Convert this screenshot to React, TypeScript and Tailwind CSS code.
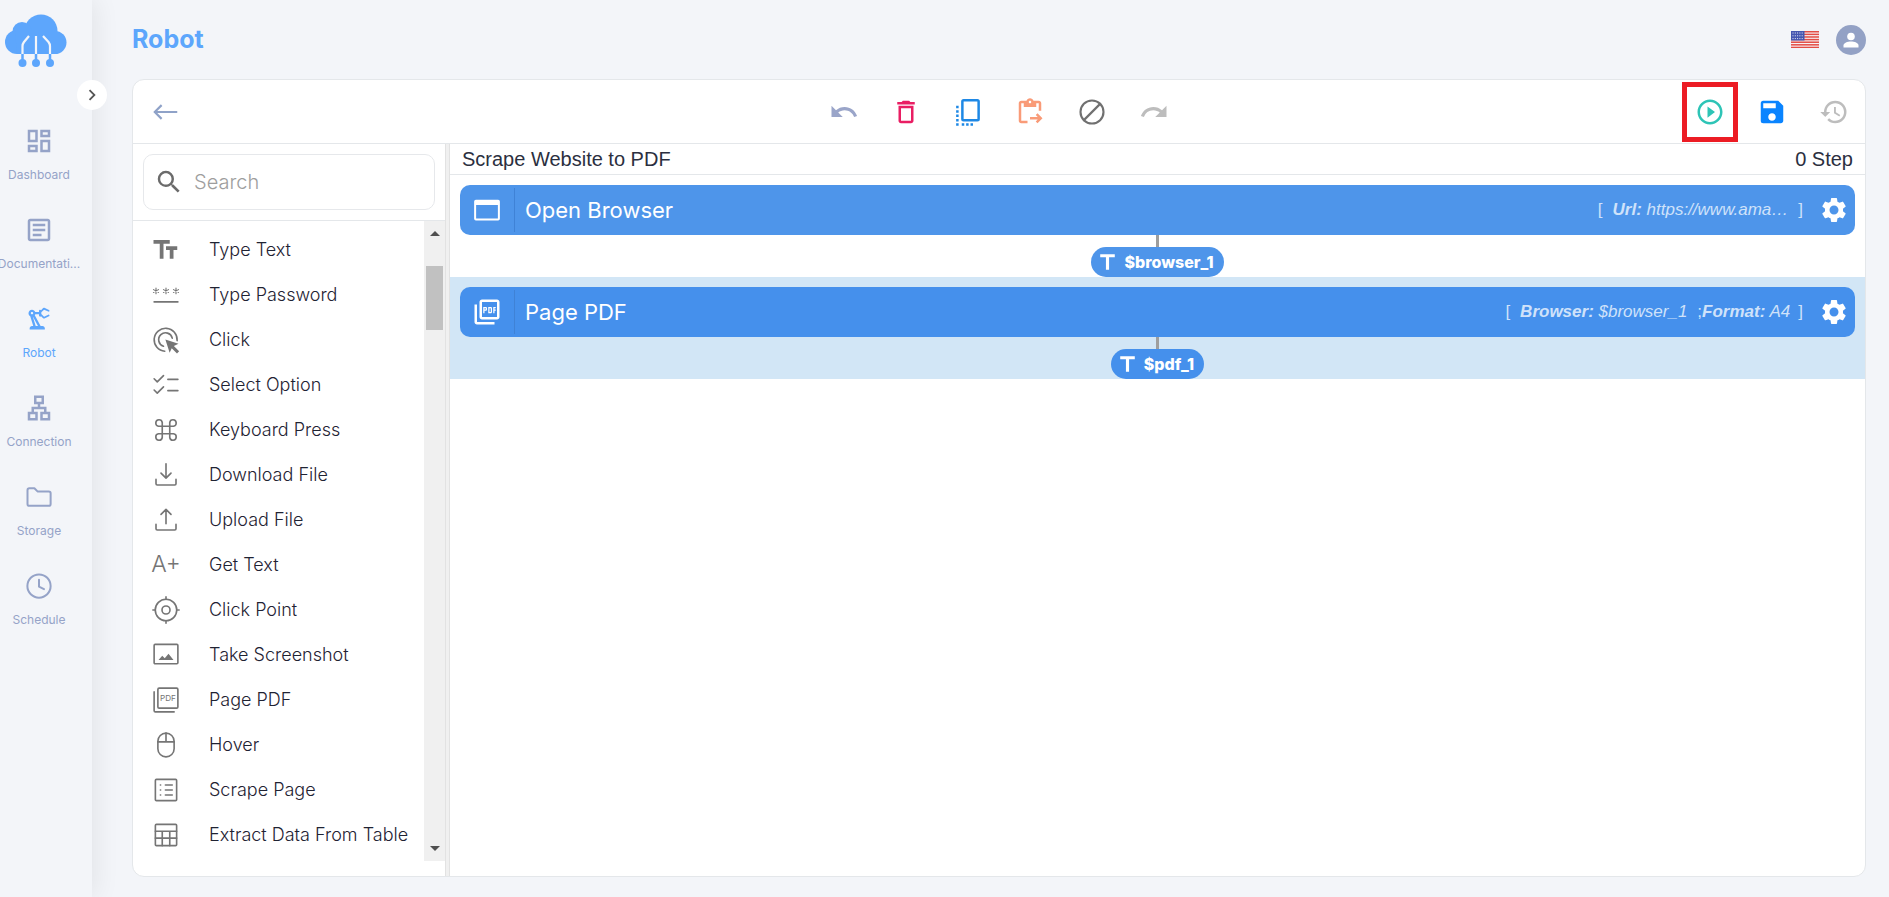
import type { ReactNode } from 'react';
import {
  MdChevronRight,
  MdDeleteOutline,
  MdFormatSize,
  MdHistory,
  MdOutlineArticle,
  MdOutlineContentPasteGo,
  MdOutlineDashboard,
  MdOutlineLan,
  MdOutlinePictureAsPdf,
  MdOutlinePrecisionManufacturing,
  MdPlayCircleOutline,
  MdRedo,
  MdSave,
  MdSearch,
  MdSettings,
  MdTitle,
  MdUndo,
} from 'react-icons/md';

const LineIcon = ({ children, size = 30, width = 1.3 }: { children: ReactNode; size?: number; width?: number }) => (
  <svg
    width={size}
    height={size}
    viewBox="0 0 24 24"
    fill="none"
    stroke="currentColor"
    strokeWidth={width}
    strokeLinecap="round"
    strokeLinejoin="round"
    aria-hidden="true">
    {children}
  </svg>
);

const Logo = () => (
  <svg width="62" height="54" viewBox="0 0 62 54" aria-label="Logo">
    <g fill="#5da6fc">
      <circle cx="36" cy="17" r="16.5" />
      <circle cx="17" cy="17.5" r="9.5" />
      <circle cx="12" cy="28" r="12" />
      <circle cx="50" cy="28.5" r="11.5" />
      <path d="M10 16H50V40H12z" />
      <circle cx="17.5" cy="49" r="4" />
      <circle cx="31" cy="49" r="4" />
      <circle cx="45" cy="49" r="4" />
    </g>
    <g fill="none" strokeWidth="2.2">
      <path stroke="#5da6fc" strokeWidth="2.5" d="M17.5 40v9M31 40v9M45 40v9" />
      <path stroke="#f3f5f9" d="M24 22l-5 6q-1.500 2-1.500 4v8M31 22v18M38 22l5.500 6q1.500 2 1.500 4v8" />
    </g>
  </svg>
);

const navItems = [
  { label: 'Dashboard', icon: <MdOutlineDashboard size={30} /> },
  { label: 'Documentati...', icon: <MdOutlineArticle size={30} /> },
  { label: 'Robot', icon: <MdOutlinePrecisionManufacturing size={28} />, active: true },
  { label: 'Connection', icon: <MdOutlineLan size={30} /> },
  {
    label: 'Storage',
    icon: (
      <LineIcon width={1.6}>
        <path d="M2.800 17.500v-11q0-1.500 1.500-1.500h4l2.500 2.500h9q1.500 0 1.500 1.500v8.500q0 1.500-1.500 1.500H4.300q-1.500 0-1.500-1.500z" />
      </LineIcon>
    ),
  },
  {
    label: 'Schedule',
    icon: (
      <LineIcon width={1.6}>
        <circle cx="12" cy="12" r="9.300" />
        <path d="M12 7v5.500l4 2" />
      </LineIcon>
    ),
  },
];

const actions = [
  { label: 'Type Text', icon: <MdFormatSize size={30} className="-scale-x-100" /> },
  {
    label: 'Type Password',
    icon: (
      <LineIcon>
        <path d="M2.500 17.500h19" />
        <path
          strokeWidth=".9"
          d="M4 6.500v4.500M2 7.700l4 2.200M2 9.900l4-2.200M12 6.500v4.500M10 7.700l4 2.200M10 9.900l4-2.200M20 6.500v4.500M18 7.700l4 2.200M18 9.900l4-2.200"
        />
      </LineIcon>
    ),
  },
  {
    label: 'Click',
    icon: (
      <LineIcon>
        <path d="M11 21A9.200 9.200 0 1 1 20.900 12.500M10 17A5.500 5.500 0 1 1 17 10.500" />
        <path fill="currentColor" stroke="none" d="M11.500 11.500l10.500 3.400-3.700 1.900 4.200 4.200-1.700 1.700-4.200-4.200-1.700 3.700z" />
      </LineIcon>
    ),
  },
  {
    label: 'Select Option',
    icon: (
      <LineIcon>
        <path d="M2.500 7l2.500 2.500L10 4.500M2.500 16l2.500 2.500 5-5M13.500 7.500h8M13.500 16.500h8" />
      </LineIcon>
    ),
  },
  {
    label: 'Keyboard Press',
    icon: (
      <LineIcon>
        <path d="M9 9h6v6H9zM9 9H6a2.600 2.600 0 1 1 3-3zM15 9V6a2.600 2.600 0 1 1 3 3zM15 15h3a2.600 2.600 0 1 1-3 3zM9 15v3a2.600 2.600 0 1 1-3-3z" />
      </LineIcon>
    ),
  },
  {
    label: 'Download File',
    icon: (
      <LineIcon>
        <path d="M12 3v11.500M8 10.500l4 4 4-4M4 15.500v3.500q0 1 1 1h14q1 0 1-1v-3.500" />
      </LineIcon>
    ),
  },
  {
    label: 'Upload File',
    icon: (
      <LineIcon>
        <path d="M12 15V3.500M8 7.500l4-4 4 4M4 15.500v3.500q0 1 1 1h14q1 0 1-1v-3.500" />
      </LineIcon>
    ),
  },
  { label: 'Get Text', icon: <span className="text-[23px] font-light whitespace-nowrap">A+</span> },
  {
    label: 'Click Point',
    icon: (
      <LineIcon>
        <circle cx="12" cy="12" r="8.600" />
        <circle cx="12" cy="12" r="3.200" />
        <path d="M12 1.500v2M12 20.500v2M1.500 12h2M20.500 12h2" />
      </LineIcon>
    ),
  },
  {
    label: 'Take Screenshot',
    icon: (
      <LineIcon>
        <rect x="2.500" y="3.500" width="19" height="15.500" rx=".8" />
        <path fill="currentColor" stroke="none" d="M6 16l3-3.500 2 2 3-3.500 4 5z" />
      </LineIcon>
    ),
  },
  {
    label: 'Page PDF',
    icon: (
      <LineIcon>
        <rect x="5.500" y="2.500" width="16" height="16" rx="1" />
        <path d="M2.500 5.500v15q0 1 1 1h15" />
        <text x="13.500" y="13" fontSize="6.500" fill="currentColor" stroke="none" textAnchor="middle">
          PDF
        </text>
      </LineIcon>
    ),
  },
  {
    label: 'Hover',
    icon: (
      <LineIcon>
        <rect x="5.500" y="2.500" width="13" height="19" rx="6.500" />
        <path d="M5.500 9.500h13M12 2.500v7" />
      </LineIcon>
    ),
  },
  {
    label: 'Scrape Page',
    icon: (
      <LineIcon>
        <rect x="3.500" y="3.500" width="17" height="17" rx=".8" />
        <path d="M11.500 8h5.500M11.500 12h5.500M11.500 16h5.500M7.500 8h.2M7.500 12h.2M7.500 16h.2" />
      </LineIcon>
    ),
  },
  {
    label: 'Extract Data From Table',
    icon: (
      <LineIcon>
        <rect x="3.500" y="3.500" width="17" height="17" rx=".8" />
        <path d="M3.500 9h17M3.500 14.500h17M9 9v11.500M15 9v11.500" />
      </LineIcon>
    ),
  },
];

const tools = [
  { label: 'Undo', color: 'text-[#9aa5c9]', icon: <MdUndo size={30} /> },
  { label: 'Delete', color: 'text-[#e91e63]', icon: <MdDeleteOutline size={30} /> },
  {
    label: 'Copy',
    color: 'text-[#1e88e5]',
    icon: (
      <LineIcon width={2}>
        <rect x="7.500" y="2.500" width="13" height="16" rx="1" />
        <path strokeLinecap="butt" strokeDasharray="2 1.500" d="M3.500 7v16M7 22h10" />
      </LineIcon>
    ),
  },
  { label: 'Paste', color: 'text-[#f99b78]', icon: <MdOutlineContentPasteGo size={30} /> },
  {
    label: 'Disable',
    color: 'text-[#707070]',
    icon: (
      <LineIcon width={1.7}>
        <circle cx="12" cy="12" r="9.200" />
        <path d="M5.500 18.500l13-13" />
      </LineIcon>
    ),
  },
  { label: 'Redo', color: 'text-[#bdbdbd]', icon: <MdRedo size={30} /> },
];

const stripes = [0, 2, 4, 6, 8, 10, 12];

const Flag = () => (
  <svg width="28" height="17" viewBox="0 0 28 17" preserveAspectRatio="none" aria-hidden="true">
    <rect width="28" height="17" fill="#f7f3f5" />
    {stripes.map(n => (
      <rect key={n} y={n * 1.308} width="28" height="1.500" fill="#e34d45" />
    ))}
    <rect width="13.500" height="9.500" fill="#4556b0" />
    <path d="M1.500 2h11M1.500 4.800h11M1.500 7.600h11" stroke="#fff" strokeWidth=".9" strokeDasharray="1 1.300" />
  </svg>
);

type StepProps = {
  title: string;
  icon: ReactNode;
  params: ReactNode;
  output: string;
  selected?: boolean;
};

const Step = ({ title, icon, params, output, selected }: StepProps) => {
  const fill = selected ? 'bg-[#4590ec]' : 'bg-[#4e95ea]';

  return (
    <li className={`flex flex-col items-center px-2.5 pt-2.5 ${selected ? 'bg-[#d2e6f6]' : ''}`}>
      <div className={`flex h-[50px] w-full items-center rounded-[10px] text-white ${fill}`}>
        <div className="flex h-11 w-[55px] shrink-0 items-center justify-center border-r border-[#3f82d6]">{icon}</div>
        <h3 className="flex-1 pl-2.5 text-[22px]">{title}</h3>
        <div className="flex items-center font-['Liberation_Sans',Arial,sans-serif] text-[17px] text-[#cfe2fa]">
          {params}
        </div>
        <button type="button" aria-label={`${title} settings`} className="mr-1.5 ml-4 p-0">
          <MdSettings size={30} />
        </button>
      </div>
      <div className="h-3 w-[3px] bg-[#9e9e9e]" />
      <div
        className={`flex h-[30px] items-center gap-1 rounded-full pr-2.5 pl-1 text-base font-extrabold text-white ${fill}`}>
        <MdTitle size={25} />
        <span>{output}</span>
      </div>
    </li>
  );
};

const Sidebar = () => (
  <aside className="relative w-[92px] shrink-0 shadow-[4px_0_24px_rgba(0,0,0,0.07)]">
    <div className="pt-3.5 pl-[5px]">
      <Logo />
    </div>
    <button
      type="button"
      aria-label="Expand menu"
      className="absolute top-20 -right-[15px] flex size-[30px] items-center justify-center rounded-full bg-white text-[#555]">
      <MdChevronRight size={22} />
    </button>
    <nav className="mt-[53px] w-[78px]">
      {navItems.map(item => (
        <a
          key={item.label}
          href="#"
          className={`flex h-[89px] flex-col items-center text-xs ${item.active ? 'text-[#5da6fc]' : 'text-[#95a3c8]'}`}>
          <span className="flex h-10 items-center">{item.icon}</span>
          <span className="mt-1 leading-5 whitespace-nowrap">{item.label}</span>
        </a>
      ))}
    </nav>
  </aside>
);

const ActionPanel = () => (
  <section className="flex w-[312px] shrink-0 flex-col">
    <div className="border-b border-[#e4e7ea] p-2.5">
      <label className="flex h-14 items-center rounded-[10px] border border-[#e6e8eb] pl-2.5 text-[#6b6b6b]">
        <MdSearch size={30} className="shrink-0" />
        <input
          type="text"
          aria-label="Search"
          placeholder="Search"
          className="ml-2.5 w-full min-w-0 text-xl font-light outline-none placeholder:text-[#9e9e9e]"
        />
      </label>
    </div>
    <div className="mb-[15px] flex min-h-0 flex-1">
      <ul className="flex-1 overflow-hidden pt-1.5">
        {actions.map(action => (
          <li key={action.label} className="flex h-[45px] items-center pl-[18px]">
            <span className="flex w-[30px] justify-center text-[#757575]">{action.icon}</span>
            <span className="ml-7 text-lg font-light whitespace-nowrap text-[#1f2333]">{action.label}</span>
          </li>
        ))}
      </ul>
      <div className="flex w-[21px] flex-col items-center justify-between bg-[#f0f0f0] py-2.5">
        <div className="flex flex-col items-center">
          <div className="size-0 border-x-[5px] border-b-[5px] border-x-transparent border-b-[#505050]" />
          <div className="mt-[30px] h-16 w-[17px] bg-[#c1c1c1]" />
        </div>
        <div className="size-0 border-x-[5px] border-t-[5px] border-x-transparent border-t-[#505050]" />
      </div>
    </div>
  </section>
);

const Toolbar = () => (
  <div className="flex h-16 shrink-0 items-center border-b border-[#e4e7ea]">
    <div className="flex flex-1">
      <button type="button" aria-label="Back" className="ml-[18px] text-[#8fa2c8]">
        <LineIcon width={1.7}>
          <path strokeLinecap="butt" strokeLinejoin="miter" d="M21 12H3M8.500 6.500L3 12l5.500 5.500" />
        </LineIcon>
      </button>
    </div>
    <div className="flex">
      {tools.map(tool => (
        <button
          key={tool.label}
          type="button"
          aria-label={tool.label}
          className={`flex w-[62px] justify-center ${tool.color}`}>
          {tool.icon}
        </button>
      ))}
    </div>
    <div className="flex flex-1 items-center justify-end">
      <button
        type="button"
        aria-label="Run"
        className="mr-[3px] flex h-[60px] w-14 items-center justify-center border-[5px] border-[#ec1c24] text-[#2ec4b6]">
        <MdPlayCircleOutline size={30} />
      </button>
      <button type="button" aria-label="Save" className="flex w-[62px] justify-center text-[#0a84ff]">
        <MdSave size={30} />
      </button>
      <button type="button" aria-label="History" className="flex w-[62px] justify-center text-[#bdbdbd]">
        <MdHistory size={30} />
      </button>
    </div>
  </div>
);

const App = () => (
  <div className="flex h-screen overflow-hidden bg-[#f3f5f9] font-[Inter,sans-serif]">
    <Sidebar />
    <main className="flex min-w-0 flex-1 flex-col pr-[23px] pb-5 pl-10">
      <header className="flex h-[79px] shrink-0 items-center">
        <h1 className="flex-1 text-[25px] font-bold text-[#5da6fc]">Robot</h1>
        <button type="button" aria-label="Language">
          <Flag />
        </button>
        <button
          type="button"
          aria-label="Account"
          className="ml-[17px] flex size-[30px] items-center justify-center rounded-full bg-[#93a1c5] text-white">
          <svg width="18" height="18" viewBox="0 0 18 18" fill="currentColor" aria-hidden="true">
            <circle cx="9" cy="5.500" r="3.800" />
            <path d="M1.500 16.500v-2c0-2.500 4-4 7.500-4s7.500 1.500 7.500 4v2z" />
          </svg>
        </button>
      </header>
      <div className="flex min-h-0 flex-1 flex-col overflow-hidden rounded-xl border border-[#e4e7ea] bg-white">
        <Toolbar />
        <div className="flex min-h-0 flex-1">
          <ActionPanel />
          <div className="w-[5px] shrink-0 border-x border-[#e2e2e2] bg-[#f0f0f0]" />
          <section className="min-w-0 flex-1">
            <div className="flex h-[31px] items-center justify-between border-b border-[#e4e7ea] px-3 font-['Liberation_Sans',Arial,sans-serif] text-xl text-[#2b2f40]">
              <h2>Scrape Website to PDF</h2>
              <span>0 Step</span>
            </div>
            <ol>
              <Step
                title="Open Browser"
                icon={
                  <LineIcon width={1.6}>
                    <rect x="2.500" y="4.500" width="19" height="15" rx=".6" />
                    <path fill="currentColor" stroke="none" d="M2.500 4.500h19v3.500h-19z" />
                  </LineIcon>
                }
                output="$browser_1"
                params={
                  <>
                    <span className="mr-2.5">[</span>
                    <em>
                      <b>Url:</b> https://www.ama…
                    </em>
                    <span className="ml-2.5">]</span>
                  </>
                }
              />
              <Step
                title="Page PDF"
                icon={<MdOutlinePictureAsPdf size={30} />}
                output="$pdf_1"
                selected
                params={
                  <>
                    <span className="mr-2.5">[</span>
                    <em>
                      <b>Browser:</b> $browser_1
                    </em>
                    <span className="ml-2.5">;</span>
                    <em>
                      <b>Format:</b> A4
                    </em>
                    <span className="ml-2">]</span>
                  </>
                }
              />
            </ol>
          </section>
        </div>
      </div>
    </main>
  </div>
);

export default App;
